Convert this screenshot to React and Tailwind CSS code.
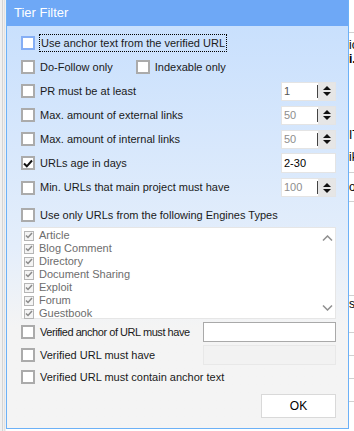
import React from "react";

const font = { fontFamily: '"Liberation Sans", Arial, sans-serif' };

function Box({ checked, focus }) {
  return (
    <div
      className={`flex h-[14px] w-[14px] shrink-0 items-center justify-center border-2 bg-white ${
        focus ? "border-[#85aef5]" : "border-[#ababab]"
      }`}
    >
      {checked && (
        <svg width="10" height="9" viewBox="0 0 10 9">
          <path d="M1 4.5 L3.8 7.3 L9 1.5" stroke="#111" strokeWidth="2" fill="none" />
        </svg>
      )}
    </div>
  );
}

function Spin({ value, dim }) {
  return (
    <div className="flex h-[19px] w-[55px] shrink-0 border border-[#e4e4e4] bg-white">
      <div className={`flex-1 pl-[2px] leading-[17px] ${dim ? "text-[#8d8d8d]" : "text-[#555]"}`}>{value}</div>
      <div className="my-[2px] w-px bg-[#444]" />
      <div className="flex w-[17px] flex-col items-center justify-center gap-[2px] bg-[#e6e6e6]">
        <svg width="8" height="4" viewBox="0 0 8 4">
          <path d="M0 4 L4 0 L8 4 Z" fill="#111" />
        </svg>
        <svg width="8" height="4" viewBox="0 0 8 4">
          <path d="M0 0 L8 0 L4 4 Z" fill="#111" />
        </svg>
      </div>
    </div>
  );
}

function Row({ label, checked, right, focus, h = "h-[24px]" }) {
  return (
    <div className={`flex ${h} items-center whitespace-nowrap`}>
      <Box checked={checked} focus={focus} />
      <span
        className={`ml-[5px] ${focus ? "outline outline-1 outline-dotted outline-black px-[1px]" : ""}`}
      >
        {label}
      </span>
      <div className="flex-1" />
      {right}
    </div>
  );
}

const engines = ["Article", "Blog Comment", "Directory", "Document Sharing", "Exploit", "Forum", "Guestbook"];

export default function App() {
  return (
    <div className="flex h-[431px] w-[354px] overflow-hidden bg-white text-[11px] text-[#1a1a1a]" style={font}>
      {/* left edge of the app behind */}
      <div className="flex h-full w-[6px] shrink-0 bg-[#f0f0f0]">
        <div className="ml-[2px] h-full w-px bg-[#d4d4d4]" />
        <div className="ml-[1px] h-full w-px bg-[#e2e2e2]" />
      </div>

      <div className="flex h-[429px] w-[343px] shrink-0 flex-col border-x border-b border-[#6cb1f7]">
        <div className="flex h-[26px] shrink-0 items-center bg-[#6ea8f6] pl-[7px] text-[13px] text-white">
          Tier Filter
        </div>
        <div className="flex flex-1 flex-col bg-gradient-to-b from-[#c9e0fd] from-0% via-[#e4eefb] via-55% to-[#f4f4f4] to-75% pl-[14px] pr-[12px] pt-[5px]">
          <Row label="Use anchor text from the verified URL" focus />
          <div className="flex h-[24px] items-center whitespace-nowrap">
            <Box />
            <span className="ml-[5px]">Do-Follow only</span>
            <div className="ml-[23px]">
              <Box />
            </div>
            <span className="ml-[5px]">Indexable only</span>
          </div>
          <Row label="PR must be at least" right={<Spin value="1" />} />
          <Row label="Max. amount of external links" right={<Spin value="50" dim />} />
          <Row label="Max. amount of internal links" right={<Spin value="50" dim />} />
          <Row
            label="URLs age in days"
            checked
            right={
              <div className="h-[20px] w-[55px] shrink-0 border border-[#e4e4e4] bg-white pl-[2px] leading-[18px] text-black">
                2-30
              </div>
            }
          />
          <Row label="Min. URLs that main project must have" h="h-[25px]" right={<Spin value="100" dim />} />
          <div className="mt-[3px]">
            <Row label="Use only URLs from the following Engines Types" />
          </div>

          <div className="flex h-[92px] border border-[#e6e6e6] bg-white">
            <div className="flex flex-1 flex-col pl-[2px] pt-[1px]">
              {engines.map((e) => (
                <div key={e} className="flex h-[13px] items-center text-[#6d6d6d]">
                  <div className="flex h-[10px] w-[10px] items-center justify-center border border-[#b5b5b5] bg-[#f4f4f4]">
                    <svg width="8" height="7" viewBox="0 0 8 7">
                      <path d="M1 3.5 L3 5.5 L7 1" stroke="#8a8a8a" strokeWidth="1.5" fill="none" />
                    </svg>
                  </div>
                  <span className="ml-[5px]">{e}</span>
                </div>
              ))}
            </div>
            <div className="flex w-[16px] flex-col items-center justify-between pb-[7px] pt-[7px]">
              <svg width="11" height="6" viewBox="0 0 11 6">
                <path d="M1 5.5 L5.5 1 L10 5.5" stroke="#909090" strokeWidth="1.5" fill="none" />
              </svg>
              <svg width="11" height="6" viewBox="0 0 11 6">
                <path d="M1 0.5 L5.5 5 L10 0.5" stroke="#909090" strokeWidth="1.5" fill="none" />
              </svg>
            </div>
          </div>

          <div className="mt-[2px] flex h-[22px] items-center whitespace-nowrap">
            <Box />
            <span className="ml-[5px] tracking-[-0.45px]">Verified anchor of URL must have</span>
            <div className="flex-1" />
            <div className="h-[20px] w-[133px] shrink-0 border border-[#a9a9a9] bg-white" />
          </div>
          <div className="mt-[1px] flex h-[22px] items-center whitespace-nowrap">
            <Box />
            <span className="ml-[5px]">Verified URL must have</span>
            <div className="flex-1" />
            <div className="h-[20px] w-[133px] shrink-0 border border-[#e8e8e8] bg-[#f2f2f2]" />
          </div>
          <Row label="Verified URL must contain anchor text" h="h-[22px]" />

          <div className="mt-[6px] flex justify-end">
            <div className="flex h-[24px] w-[75px] items-center justify-center border border-[#d9d9d9] bg-white text-[12px] text-black">
              OK
            </div>
          </div>
        </div>
      </div>

      {/* right edge of the app behind */}
      <div className="flex h-full flex-1 flex-col overflow-hidden whitespace-nowrap text-[12px] leading-[12px] text-black">
        <div className="mt-[32px] h-px bg-[#d0d0d0]" />
        <div className="mt-[6px]">io</div>
        <div className="mt-[2px] font-bold">i.</div>
        <div className="mt-[64px]">IT</div>
        <div className="mt-[10px]">ik</div>
        <div className="mt-[9px] h-px bg-[#d0d0d0]" />
        <div className="mt-[8px]">or</div>
        <div className="mt-[8px] h-px bg-[#d0d0d0]" />
        <div className="mt-[93px] h-px bg-[#d0d0d0]" />
        <div className="mt-[2px]">st</div>
        <div className="mt-[22px] h-px bg-[#d0d0d0]" />
        <div className="mt-[22px] h-px bg-[#d0d0d0]" />
        <div className="mt-[22px] h-px bg-[#d0d0d0]" />
        <div className="mt-[22px] h-px bg-[#d0d0d0]" />
      </div>
    </div>
  );
}
